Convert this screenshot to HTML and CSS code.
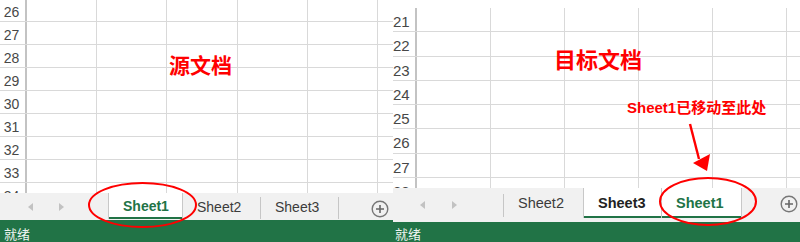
FILE: index.html
```html
<!DOCTYPE html>
<html lang="zh-CN">
<head>
  <meta charset="UTF-8" />
  <title>移动工作表</title>
  <link rel="stylesheet" href="styles.css">
</head>
<body>
  <!-- 源文档 -->
  <section class="sheet src">
    <div class="grid">
      <div class="row"><span class="rh">26</span><i></i><i></i><i></i><i></i><i></i><i></i></div>
      <div class="row"><span class="rh">27</span><i></i><i></i><i></i><i></i><i></i><i></i></div>
      <div class="row"><span class="rh">28</span><i></i><i></i><i></i><i></i><i></i><i></i></div>
      <div class="row"><span class="rh">29</span><i></i><i></i><i></i><i></i><i></i><i></i></div>
      <div class="row"><span class="rh">30</span><i></i><i></i><i></i><i></i><i></i><i></i></div>
      <div class="row"><span class="rh">31</span><i></i><i></i><i></i><i></i><i></i><i></i></div>
      <div class="row"><span class="rh">32</span><i></i><i></i><i></i><i></i><i></i><i></i></div>
      <div class="row"><span class="rh">33</span><i></i><i></i><i></i><i></i><i></i><i></i></div>
      <div class="row"><span class="rh">34</span><i></i><i></i><i></i><i></i><i></i><i></i></div>
    </div>
    <div class="tabs">
      <div class="nav"><span class="arr-l"></span><span class="arr-r"></span></div>
      <div class="tab active green">Sheet1</div>
      <div class="tab">Sheet2</div>
      <span class="sep"></span>
      <div class="tab">Sheet3</div>
      <span class="sep"></span>
      <svg class="plus" width="18" height="18" viewBox="0 0 18 18">
        <circle cx="9" cy="9" r="7.8" fill="none" stroke="#777" stroke-width="1.4"/>
        <path d="M9 5v8M5 9h8" stroke="#666" stroke-width="1.6"/>
      </svg>
    </div>
    <div class="status">就绪</div>

    <div class="label big">源文档</div>
    <svg class="marks" width="393" height="242">
      <ellipse cx="142.5" cy="205" rx="53.5" ry="22" fill="none" stroke="#f00" stroke-width="2"/>
    </svg>
  </section>

  <!-- 目标文档 -->
  <section class="sheet dst">
    <div class="grid">
      <div class="row"><span class="rh">21</span><i></i><i></i><i></i><i></i><i></i><i></i></div>
      <div class="row"><span class="rh">22</span><i></i><i></i><i></i><i></i><i></i><i></i></div>
      <div class="row"><span class="rh">23</span><i></i><i></i><i></i><i></i><i></i><i></i></div>
      <div class="row"><span class="rh">24</span><i></i><i></i><i></i><i></i><i></i><i></i></div>
      <div class="row"><span class="rh">25</span><i></i><i></i><i></i><i></i><i></i><i></i></div>
      <div class="row"><span class="rh">26</span><i></i><i></i><i></i><i></i><i></i><i></i></div>
      <div class="row"><span class="rh">27</span><i></i><i></i><i></i><i></i><i></i><i></i></div>
      <div class="row"><span class="rh">28</span><i></i><i></i><i></i><i></i><i></i><i></i></div>
    </div>
    <div class="tabs">
      <div class="nav"><span class="arr-l"></span><span class="arr-r"></span></div>
      <span class="sep"></span>
      <div class="tab">Sheet2</div>
      <div class="tab active">Sheet3</div>
      <div class="tab active green">Sheet1</div>
      <svg class="plus" width="18" height="18" viewBox="0 0 18 18">
        <circle cx="9" cy="9" r="7.8" fill="none" stroke="#777" stroke-width="1.4"/>
        <path d="M9 5v8M5 9h8" stroke="#666" stroke-width="1.6"/>
      </svg>
    </div>
    <div class="status">就绪</div>

    <div class="label big">目标文档</div>
    <div class="label note">Sheet1已移动至此处</div>
    <svg class="marks" width="407" height="242">
      <path d="M297 124L306 159" stroke="#f00" stroke-width="2.4"/>
      <polygon points="314,171 300,163 317,154" fill="#f00"/>
      <ellipse cx="315" cy="201.5" rx="48" ry="23.5" fill="none" stroke="#f00" stroke-width="2"/>
    </svg>
  </section>
</body>
</html>
```

FILE: styles.css
```css
* { box-sizing: border-box; }
body {
  margin: 0; width: 800px; height: 242px; overflow: hidden;
  display: flex; background: #fff;
  font-family: "Liberation Sans", Arial, "Noto Sans CJK SC", sans-serif;
}

.sheet {
  position: relative; display: flex; flex-direction: column;
  height: 242px; overflow: hidden;
}
.src { width: 393px; }
.dst { width: 407px; }

/* grid */
.grid { flex: 1; overflow: hidden; }
.src .grid { margin-top: -1px; }
.dst .grid { padding-top: 8px; }
.row { display: flex; border-bottom: 1px solid #d9d9d9; flex: none; }
.row i { flex: none; border-right: 1px solid #d9d9d9; }
.src .row { height: 23px; }
.src .row i { width: 70.2px; }
.dst .row { height: 24.3px; }
.dst .row i { width: 74px; }

.rh {
  flex: none; border-right: 2px solid #c3c3c3; color: #474747;
  padding-top: 3px;
}
.src .rh { width: 27px; font-size: 14px; line-height: 20px; text-align: center; padding-right: 2px; }
.dst .rh { width: 24px; font-size: 15px; line-height: 21px; text-align: left; }

/* sheet tabs */
.tabs { display: flex; background: #f1f1f1; flex: none; }
.src .tabs { height: 27px; }
.dst .tabs { height: 34px; }
.nav { display: flex; align-items: center; flex: none; }
.src .nav { width: 108px; padding-left: 28px; }
.dst .nav { width: 110px; padding-left: 27px; }
.arr-l, .arr-r { width: 0; height: 0; border-top: 4px solid transparent; border-bottom: 4px solid transparent; }
.arr-l { border-right: 5px solid #c2c2c2; }
.src .arr-l { margin-right: 26px; }
.dst .arr-l { margin-right: 27px; }
.arr-r { border-left: 5px solid #c2c2c2; }

.tab {
  display: flex; align-items: center; padding: 0 14px;
  color: #3c3c3c; font-size: 14px; white-space: nowrap;
}
.src .tab { width: 77px; }
.src .tab.active { width: 75px; }
.dst .tab { width: 79px; font-size: 14.5px; margin-bottom: 4px; }
.dst .tab.active + .tab.active { width: 80px; }
.tab.active {
  background: #fff; font-weight: bold; color: #222;
  border-left: 1px solid #c8c8c8; border-right: 1px solid #c8c8c8;
  box-shadow: inset 0 -2px #217346;
}
.src .tab.active { margin-bottom: 1px; }
.tab.active + .tab.active { border-left: none; }
.tab.green { color: #217346; }
.sep { flex: none; width: 1px; background: #c6c6c6; align-self: center; }
.src .sep { height: 22px; margin-top: 3px; }
.dst .sep { height: 23px; }

.plus { margin-left: auto; align-self: center; flex: none; }
.src .plus { margin-right: 4px; margin-top: 5px; }
.dst .plus { margin-right: 2px; margin-top: -2px; }

/* status bar */
.status {
  flex: none; background: #217346; color: #eef4f0;
  font-family: "Noto Sans CJK SC", sans-serif; font-size: 13px;
  line-height: 16px; padding-left: 4px;
}
.src .status { height: 22px; padding-top: 6px; }
.dst .status { height: 20px; padding-top: 4px; padding-left: 2px; }

/* annotations */
.label {
  position: absolute; color: #f00; font-weight: bold; line-height: 1;
  font-family: "Noto Sans CJK SC", sans-serif; white-space: nowrap;
}
.src .big { left: 169px; top: 54px; font-size: 21px; }
.dst .big { left: 161px; top: 47px; font-size: 22px; }
.note { left: 234px; top: 100px; font-size: 15px; font-family: "Liberation Sans", "Noto Sans CJK SC", sans-serif; }
.marks { position: absolute; left: 0; top: 0; pointer-events: none; }
```
